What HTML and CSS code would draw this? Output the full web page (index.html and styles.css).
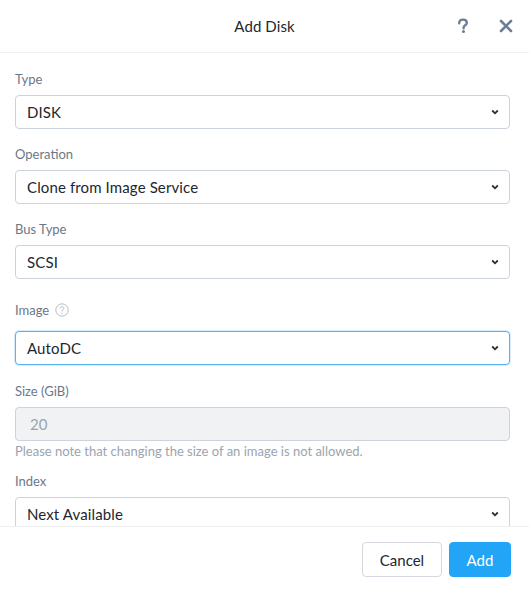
FILE: index.html
```html
<!DOCTYPE html>
<html>
<head>
<meta charset="utf-8">
<link rel="stylesheet" href="styles.css">
</head>
<body>
<div class="modal">
  <div class="header">
    <div></div>
    <div class="title">Add Disk</div>
    <div class="header-actions">
      <svg class="hicon" width="12" height="16" viewBox="0 0 12 16"><path d="M2.2 5.2 C2.2 2.8 3.9 1.6 6 1.6 C8.2 1.6 9.8 2.9 9.8 4.8 C9.8 6.4 8.8 7.1 7.7 7.8 C6.9 8.3 6.6 8.7 6.6 9.6 L6.6 10.2" fill="none" stroke="#6c7f93" stroke-width="2.4" stroke-linecap="round"/><circle cx="6.5" cy="13.6" r="1.5" fill="#6c7f93"/></svg>
      <svg class="hicon close" width="14" height="14" viewBox="0 0 14 14"><path d="M2 2 L12 12 M12 2 L2 12" stroke="#6c7f93" stroke-width="2.6" stroke-linecap="round"/></svg>
    </div>
  </div>
  <div class="body">
    <div class="group">
      <div class="label">Type</div>
      <div class="select"><span>DISK</span><svg class="chev" width="8" height="6" viewBox="0 0 8 6"><path d="M1.2 1.5 L4 4.3 L6.8 1.5" fill="none" stroke="#2a3038" stroke-width="1.8"/></svg></div>
    </div>
    <div class="group">
      <div class="label">Operation</div>
      <div class="select"><span>Clone from Image Service</span><svg class="chev" width="8" height="6" viewBox="0 0 8 6"><path d="M1.2 1.5 L4 4.3 L6.8 1.5" fill="none" stroke="#2a3038" stroke-width="1.8"/></svg></div>
    </div>
    <div class="group">
      <div class="label">Bus Type</div>
      <div class="select"><span>SCSI</span><svg class="chev" width="8" height="6" viewBox="0 0 8 6"><path d="M1.2 1.5 L4 4.3 L6.8 1.5" fill="none" stroke="#2a3038" stroke-width="1.8"/></svg></div>
    </div>
    <div class="group group-image">
      <div class="label label-icon">Image <svg class="qmark" width="14" height="14" viewBox="0 0 14 14"><circle cx="7" cy="7" r="6.2" fill="none" stroke="#b3bcc6" stroke-width="1"/><path d="M5.1 5.4 C5.1 4.3 5.9 3.7 7 3.7 C8.1 3.7 8.9 4.3 8.9 5.2 C8.9 6 8.3 6.3 7.7 6.7 C7.2 7 7 7.3 7 8 L7 8.4" fill="none" stroke="#b3bcc6" stroke-width="1"/><circle cx="7" cy="10.2" r="0.7" fill="#b3bcc6"/></svg></div>
      <div class="select focus"><span>AutoDC</span><svg class="chev" width="8" height="6" viewBox="0 0 8 6"><path d="M1.2 1.5 L4 4.3 L6.8 1.5" fill="none" stroke="#2a3038" stroke-width="1.8"/></svg></div>
    </div>
    <div class="group group-help">
      <div class="label">Size (GiB)</div>
      <div class="input disabled">20</div>
      <div class="help">Please note that changing the size of an image is not allowed.</div>
    </div>
    <div class="group">
      <div class="label">Index</div>
      <div class="select"><span>Next Available</span><svg class="chev" width="8" height="6" viewBox="0 0 8 6"><path d="M1.2 1.5 L4 4.3 L6.8 1.5" fill="none" stroke="#2a3038" stroke-width="1.8"/></svg></div>
    </div>
  </div>
  <div class="footer">
    <button class="btn btn-default">Cancel</button>
    <button class="btn btn-primary">Add</button>
  </div>
</div>
</body>
</html>
```

FILE: styles.css
```css
* { box-sizing: border-box; }
html, body { margin: 0; padding: 0; background: #ffffff; }
body {
  font-family: Lato, "Open Sans", "Liberation Sans", sans-serif;
  color: #22272e;
}
.modal {
  width: 529px;
  height: 591px;
  display: flex;
  flex-direction: column;
  background: #fff;
}
.header {
  height: 53px;
  flex: none;
  display: grid;
  grid-template-columns: 1fr auto 1fr;
  align-items: center;
  border-bottom: 1px solid #eef0f2;
  padding: 0 16px 1px 16px;
}
.title {
  font-size: 15px;
  color: #22272e;
  letter-spacing: 0.1px;
}
.header-actions {
  display: flex;
  justify-content: flex-end;
  align-items: center;
  gap: 30px;
}
.hicon { display: block; }
.body {
  flex: 1;
  overflow: hidden;
  padding: 18px 19px 0 15px;
}
.group { margin-bottom: 17px; }
.group-image { margin-bottom: 18px; }
.group-help { margin-bottom: 14px; }
.label {
  font-size: 13px;
  line-height: 16px;
  color: #6b7888;
  margin-bottom: 8px;
}
.label-icon {
  height: 27px;
  display: flex;
  align-items: center;
  gap: 6px;
  margin-bottom: 8px;
}
.qmark { display: block; }
.select, .input {
  height: 34px;
  border: 1px solid #cdd3da;
  border-radius: 4px;
  display: flex;
  align-items: center;
  justify-content: space-between;
  padding: 0 10px 0 11px;
  font-size: 15px;
  letter-spacing: 0.12px;
  color: #22272e;
  background: #fff;
}
.select.focus {
  border-color: #5ab4f3;
  box-shadow: 0 0 0 1px rgba(90, 180, 243, 0.25);
}
.chev { display: block; }
.input.disabled {
  background: #f1f2f4;
  color: #9aa4b0;
  padding-left: 14px;
}
.help {
  font-size: 13px;
  line-height: 16px;
  color: #9aa4b0;
  margin-top: 2px;
}
.footer {
  flex: none;
  border-top: 1px solid #eef0f2;
  display: flex;
  justify-content: flex-end;
  gap: 7px;
  padding: 15px 18px 14px 0;
}
.btn {
  height: 35px;
  border-radius: 4px;
  font-family: Lato, "Open Sans", "Liberation Sans", sans-serif;
  font-size: 15px;
  padding: 0;
  cursor: pointer;
}
.btn-default {
  width: 80px;
  background: #fff;
  border: 1px solid #d4d9df;
  color: #22272e;
}
.btn-primary {
  width: 62px;
  background: #22a5f7;
  border: 1px solid #22a5f7;
  color: #fff;
}
```
